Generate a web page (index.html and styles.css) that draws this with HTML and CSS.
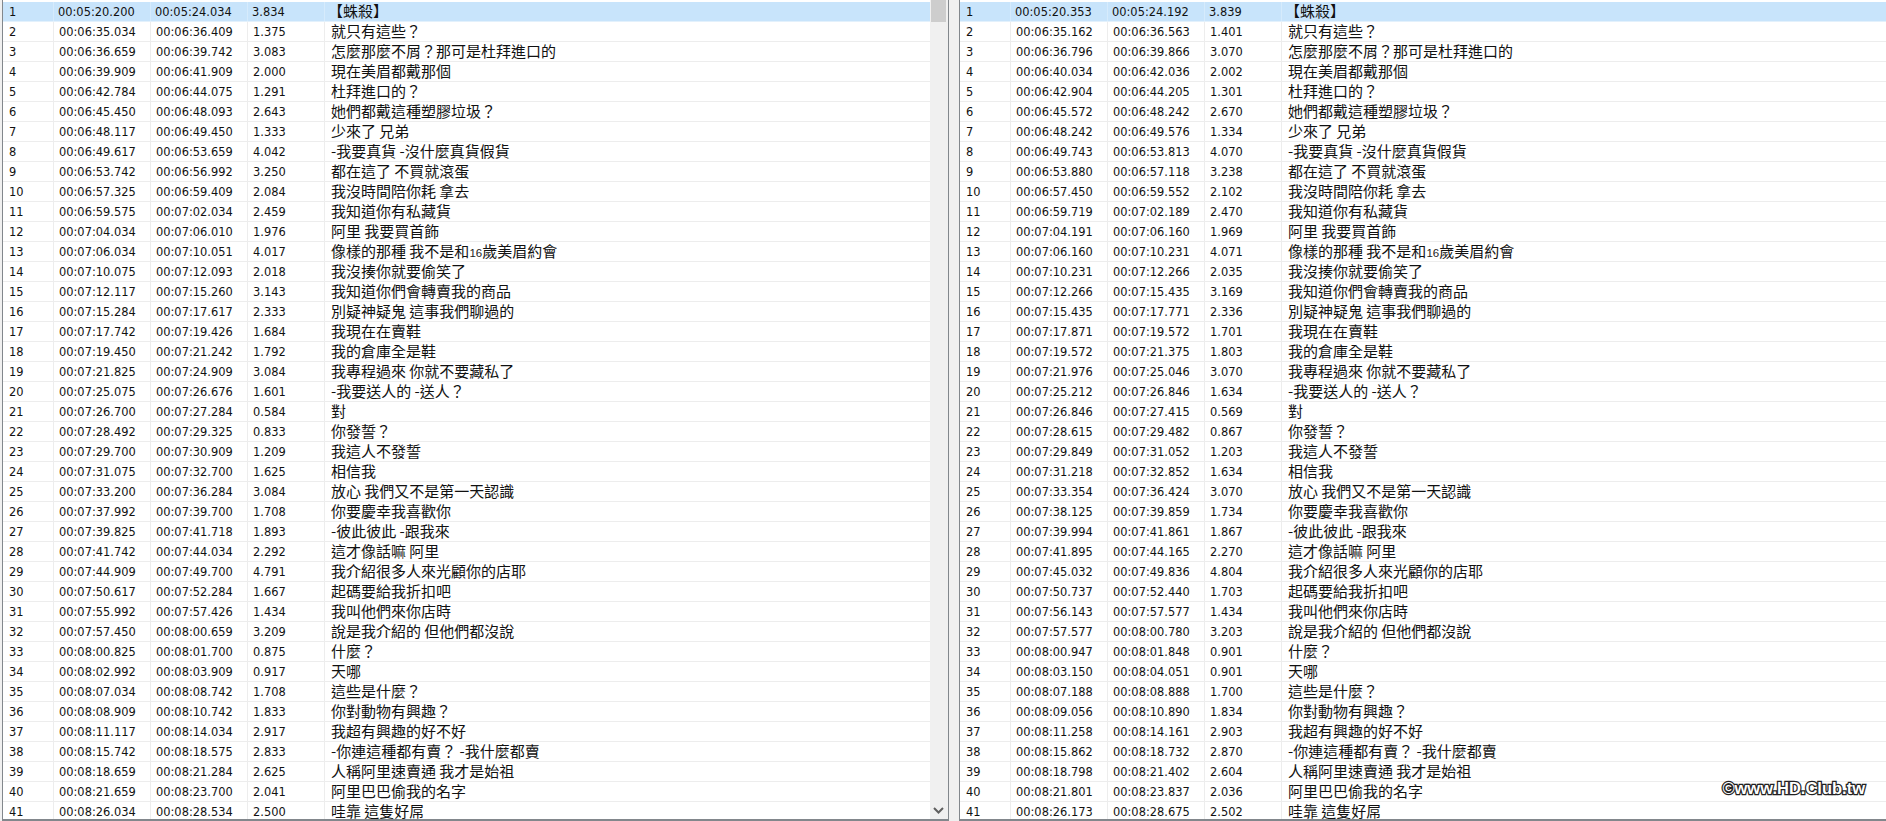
FILE: index.html
```html
<!DOCTYPE html>
<html lang="zh-Hant">
<head>
<meta charset="utf-8">
<title>Subtitle comparison</title>
<link rel="stylesheet" href="styles.css">
</head>
<body>
<main class="screen">
<section class="panel panel-left">
<div class="list">
<div class="row selected"><span>1</span><span>00:05:20.200</span><span>00:05:24.034</span><span>3.834</span><span class="txt">【蛛殺】</span></div>
<div class="row"><span>2</span><span>00:06:35.034</span><span>00:06:36.409</span><span>1.375</span><span class="txt">就只有這些？</span></div>
<div class="row"><span>3</span><span>00:06:36.659</span><span>00:06:39.742</span><span>3.083</span><span class="txt">怎麼那麼不屑？那可是杜拜進口的</span></div>
<div class="row"><span>4</span><span>00:06:39.909</span><span>00:06:41.909</span><span>2.000</span><span class="txt">現在美眉都戴那個</span></div>
<div class="row"><span>5</span><span>00:06:42.784</span><span>00:06:44.075</span><span>1.291</span><span class="txt">杜拜進口的？</span></div>
<div class="row"><span>6</span><span>00:06:45.450</span><span>00:06:48.093</span><span>2.643</span><span class="txt">她們都戴這種塑膠垃圾？</span></div>
<div class="row"><span>7</span><span>00:06:48.117</span><span>00:06:49.450</span><span>1.333</span><span class="txt">少來了 兄弟</span></div>
<div class="row"><span>8</span><span>00:06:49.617</span><span>00:06:53.659</span><span>4.042</span><span class="txt">-我要真貨 -沒什麼真貨假貨</span></div>
<div class="row"><span>9</span><span>00:06:53.742</span><span>00:06:56.992</span><span>3.250</span><span class="txt">都在這了 不買就滾蛋</span></div>
<div class="row"><span>10</span><span>00:06:57.325</span><span>00:06:59.409</span><span>2.084</span><span class="txt">我沒時間陪你耗 拿去</span></div>
<div class="row"><span>11</span><span>00:06:59.575</span><span>00:07:02.034</span><span>2.459</span><span class="txt">我知道你有私藏貨</span></div>
<div class="row"><span>12</span><span>00:07:04.034</span><span>00:07:06.010</span><span>1.976</span><span class="txt">阿里 我要買首飾</span></div>
<div class="row"><span>13</span><span>00:07:06.034</span><span>00:07:10.051</span><span>4.017</span><span class="txt">像樣的那種 我不是和<span class="latin">16</span>歲美眉約會</span></div>
<div class="row"><span>14</span><span>00:07:10.075</span><span>00:07:12.093</span><span>2.018</span><span class="txt">我沒揍你就要偷笑了</span></div>
<div class="row"><span>15</span><span>00:07:12.117</span><span>00:07:15.260</span><span>3.143</span><span class="txt">我知道你們會轉賣我的商品</span></div>
<div class="row"><span>16</span><span>00:07:15.284</span><span>00:07:17.617</span><span>2.333</span><span class="txt">別疑神疑鬼 這事我們聊過的</span></div>
<div class="row"><span>17</span><span>00:07:17.742</span><span>00:07:19.426</span><span>1.684</span><span class="txt">我現在在賣鞋</span></div>
<div class="row"><span>18</span><span>00:07:19.450</span><span>00:07:21.242</span><span>1.792</span><span class="txt">我的倉庫全是鞋</span></div>
<div class="row"><span>19</span><span>00:07:21.825</span><span>00:07:24.909</span><span>3.084</span><span class="txt">我專程過來 你就不要藏私了</span></div>
<div class="row"><span>20</span><span>00:07:25.075</span><span>00:07:26.676</span><span>1.601</span><span class="txt">-我要送人的 -送人？</span></div>
<div class="row"><span>21</span><span>00:07:26.700</span><span>00:07:27.284</span><span>0.584</span><span class="txt">對</span></div>
<div class="row"><span>22</span><span>00:07:28.492</span><span>00:07:29.325</span><span>0.833</span><span class="txt">你發誓？</span></div>
<div class="row"><span>23</span><span>00:07:29.700</span><span>00:07:30.909</span><span>1.209</span><span class="txt">我這人不發誓</span></div>
<div class="row"><span>24</span><span>00:07:31.075</span><span>00:07:32.700</span><span>1.625</span><span class="txt">相信我</span></div>
<div class="row"><span>25</span><span>00:07:33.200</span><span>00:07:36.284</span><span>3.084</span><span class="txt">放心 我們又不是第一天認識</span></div>
<div class="row"><span>26</span><span>00:07:37.992</span><span>00:07:39.700</span><span>1.708</span><span class="txt">你要慶幸我喜歡你</span></div>
<div class="row"><span>27</span><span>00:07:39.825</span><span>00:07:41.718</span><span>1.893</span><span class="txt">-彼此彼此 -跟我來</span></div>
<div class="row"><span>28</span><span>00:07:41.742</span><span>00:07:44.034</span><span>2.292</span><span class="txt">這才像話嘛 阿里</span></div>
<div class="row"><span>29</span><span>00:07:44.909</span><span>00:07:49.700</span><span>4.791</span><span class="txt">我介紹很多人來光顧你的店耶</span></div>
<div class="row"><span>30</span><span>00:07:50.617</span><span>00:07:52.284</span><span>1.667</span><span class="txt">起碼要給我折扣吧</span></div>
<div class="row"><span>31</span><span>00:07:55.992</span><span>00:07:57.426</span><span>1.434</span><span class="txt">我叫他們來你店時</span></div>
<div class="row"><span>32</span><span>00:07:57.450</span><span>00:08:00.659</span><span>3.209</span><span class="txt">說是我介紹的 但他們都沒說</span></div>
<div class="row"><span>33</span><span>00:08:00.825</span><span>00:08:01.700</span><span>0.875</span><span class="txt">什麼？</span></div>
<div class="row"><span>34</span><span>00:08:02.992</span><span>00:08:03.909</span><span>0.917</span><span class="txt">天哪</span></div>
<div class="row"><span>35</span><span>00:08:07.034</span><span>00:08:08.742</span><span>1.708</span><span class="txt">這些是什麼？</span></div>
<div class="row"><span>36</span><span>00:08:08.909</span><span>00:08:10.742</span><span>1.833</span><span class="txt">你對動物有興趣？</span></div>
<div class="row"><span>37</span><span>00:08:11.117</span><span>00:08:14.034</span><span>2.917</span><span class="txt">我超有興趣的好不好</span></div>
<div class="row"><span>38</span><span>00:08:15.742</span><span>00:08:18.575</span><span>2.833</span><span class="txt">-你連這種都有賣？ -我什麼都賣</span></div>
<div class="row"><span>39</span><span>00:08:18.659</span><span>00:08:21.284</span><span>2.625</span><span class="txt">人稱阿里速賣通 我才是始祖</span></div>
<div class="row"><span>40</span><span>00:08:21.659</span><span>00:08:23.700</span><span>2.041</span><span class="txt">阿里巴巴偷我的名字</span></div>
<div class="row"><span>41</span><span>00:08:26.034</span><span>00:08:28.534</span><span>2.500</span><span class="txt">哇靠 這隻好屌</span></div>
</div>
<div class="scrollbar">
<div class="thumb"></div>
<svg class="chevron" width="11" height="7" viewBox="0 0 11 7"><path d="M1 1l4.500 4.500L10 1" fill="none" stroke="#606060" stroke-width="2"/></svg>
</div>
</section>
<section class="panel panel-right">
<div class="list">
<div class="row selected"><span>1</span><span>00:05:20.353</span><span>00:05:24.192</span><span>3.839</span><span class="txt">【蛛殺】</span></div>
<div class="row"><span>2</span><span>00:06:35.162</span><span>00:06:36.563</span><span>1.401</span><span class="txt">就只有這些？</span></div>
<div class="row"><span>3</span><span>00:06:36.796</span><span>00:06:39.866</span><span>3.070</span><span class="txt">怎麼那麼不屑？那可是杜拜進口的</span></div>
<div class="row"><span>4</span><span>00:06:40.034</span><span>00:06:42.036</span><span>2.002</span><span class="txt">現在美眉都戴那個</span></div>
<div class="row"><span>5</span><span>00:06:42.904</span><span>00:06:44.205</span><span>1.301</span><span class="txt">杜拜進口的？</span></div>
<div class="row"><span>6</span><span>00:06:45.572</span><span>00:06:48.242</span><span>2.670</span><span class="txt">她們都戴這種塑膠垃圾？</span></div>
<div class="row"><span>7</span><span>00:06:48.242</span><span>00:06:49.576</span><span>1.334</span><span class="txt">少來了 兄弟</span></div>
<div class="row"><span>8</span><span>00:06:49.743</span><span>00:06:53.813</span><span>4.070</span><span class="txt">-我要真貨 -沒什麼真貨假貨</span></div>
<div class="row"><span>9</span><span>00:06:53.880</span><span>00:06:57.118</span><span>3.238</span><span class="txt">都在這了 不買就滾蛋</span></div>
<div class="row"><span>10</span><span>00:06:57.450</span><span>00:06:59.552</span><span>2.102</span><span class="txt">我沒時間陪你耗 拿去</span></div>
<div class="row"><span>11</span><span>00:06:59.719</span><span>00:07:02.189</span><span>2.470</span><span class="txt">我知道你有私藏貨</span></div>
<div class="row"><span>12</span><span>00:07:04.191</span><span>00:07:06.160</span><span>1.969</span><span class="txt">阿里 我要買首飾</span></div>
<div class="row"><span>13</span><span>00:07:06.160</span><span>00:07:10.231</span><span>4.071</span><span class="txt">像樣的那種 我不是和<span class="latin">16</span>歲美眉約會</span></div>
<div class="row"><span>14</span><span>00:07:10.231</span><span>00:07:12.266</span><span>2.035</span><span class="txt">我沒揍你就要偷笑了</span></div>
<div class="row"><span>15</span><span>00:07:12.266</span><span>00:07:15.435</span><span>3.169</span><span class="txt">我知道你們會轉賣我的商品</span></div>
<div class="row"><span>16</span><span>00:07:15.435</span><span>00:07:17.771</span><span>2.336</span><span class="txt">別疑神疑鬼 這事我們聊過的</span></div>
<div class="row"><span>17</span><span>00:07:17.871</span><span>00:07:19.572</span><span>1.701</span><span class="txt">我現在在賣鞋</span></div>
<div class="row"><span>18</span><span>00:07:19.572</span><span>00:07:21.375</span><span>1.803</span><span class="txt">我的倉庫全是鞋</span></div>
<div class="row"><span>19</span><span>00:07:21.976</span><span>00:07:25.046</span><span>3.070</span><span class="txt">我專程過來 你就不要藏私了</span></div>
<div class="row"><span>20</span><span>00:07:25.212</span><span>00:07:26.846</span><span>1.634</span><span class="txt">-我要送人的 -送人？</span></div>
<div class="row"><span>21</span><span>00:07:26.846</span><span>00:07:27.415</span><span>0.569</span><span class="txt">對</span></div>
<div class="row"><span>22</span><span>00:07:28.615</span><span>00:07:29.482</span><span>0.867</span><span class="txt">你發誓？</span></div>
<div class="row"><span>23</span><span>00:07:29.849</span><span>00:07:31.052</span><span>1.203</span><span class="txt">我這人不發誓</span></div>
<div class="row"><span>24</span><span>00:07:31.218</span><span>00:07:32.852</span><span>1.634</span><span class="txt">相信我</span></div>
<div class="row"><span>25</span><span>00:07:33.354</span><span>00:07:36.424</span><span>3.070</span><span class="txt">放心 我們又不是第一天認識</span></div>
<div class="row"><span>26</span><span>00:07:38.125</span><span>00:07:39.859</span><span>1.734</span><span class="txt">你要慶幸我喜歡你</span></div>
<div class="row"><span>27</span><span>00:07:39.994</span><span>00:07:41.861</span><span>1.867</span><span class="txt">-彼此彼此 -跟我來</span></div>
<div class="row"><span>28</span><span>00:07:41.895</span><span>00:07:44.165</span><span>2.270</span><span class="txt">這才像話嘛 阿里</span></div>
<div class="row"><span>29</span><span>00:07:45.032</span><span>00:07:49.836</span><span>4.804</span><span class="txt">我介紹很多人來光顧你的店耶</span></div>
<div class="row"><span>30</span><span>00:07:50.737</span><span>00:07:52.440</span><span>1.703</span><span class="txt">起碼要給我折扣吧</span></div>
<div class="row"><span>31</span><span>00:07:56.143</span><span>00:07:57.577</span><span>1.434</span><span class="txt">我叫他們來你店時</span></div>
<div class="row"><span>32</span><span>00:07:57.577</span><span>00:08:00.780</span><span>3.203</span><span class="txt">說是我介紹的 但他們都沒說</span></div>
<div class="row"><span>33</span><span>00:08:00.947</span><span>00:08:01.848</span><span>0.901</span><span class="txt">什麼？</span></div>
<div class="row"><span>34</span><span>00:08:03.150</span><span>00:08:04.051</span><span>0.901</span><span class="txt">天哪</span></div>
<div class="row"><span>35</span><span>00:08:07.188</span><span>00:08:08.888</span><span>1.700</span><span class="txt">這些是什麼？</span></div>
<div class="row"><span>36</span><span>00:08:09.056</span><span>00:08:10.890</span><span>1.834</span><span class="txt">你對動物有興趣？</span></div>
<div class="row"><span>37</span><span>00:08:11.258</span><span>00:08:14.161</span><span>2.903</span><span class="txt">我超有興趣的好不好</span></div>
<div class="row"><span>38</span><span>00:08:15.862</span><span>00:08:18.732</span><span>2.870</span><span class="txt">-你連這種都有賣？ -我什麼都賣</span></div>
<div class="row"><span>39</span><span>00:08:18.798</span><span>00:08:21.402</span><span>2.604</span><span class="txt">人稱阿里速賣通 我才是始祖</span></div>
<div class="row"><span>40</span><span>00:08:21.801</span><span>00:08:23.837</span><span>2.036</span><span class="txt">阿里巴巴偷我的名字</span></div>
<div class="row"><span>41</span><span>00:08:26.173</span><span>00:08:28.675</span><span>2.502</span><span class="txt">哇靠 這隻好屌</span></div>
</div>
<div class="watermark">©www.HD.Club.tw</div>
</section>
</main>
</body>
</html>
```

FILE: styles.css
```css
* {
  box-sizing: border-box;
}

html,
body {
  margin: 0;
  height: 821px;
  overflow: hidden;
  background: #f0f0f0;
}

.screen {
  display: flex;
  justify-content: space-between;
  width: 1886px;
  height: 821px;
  font-family: "DejaVu Sans", "Liberation Sans", sans-serif;
  font-stretch: condensed;
  font-size: 12.7px;
  color: #111;
}

.panel {
  position: relative;
  display: flex;
  height: 821px;
  overflow: hidden;
  background: #fff;
  border-left: 1px solid #82878c;
  border-bottom: 2px solid #82878c;
}

.panel-left {
  width: 947px;
  margin-left: 2px;
  border-right: 1px solid #82878c;
}

.panel-right {
  width: 927px;
}

.list {
  flex: 1;
  min-width: 0;
  padding-top: 2px;
}

.row {
  display: grid;
  grid-template-columns: 51px 97px 97px 77px 1fr;
  height: 20px;
  line-height: 19px;
  border-bottom: 1px solid #ededed;
  white-space: nowrap;
}

.row > span {
  height: 19px;
  padding-left: 5px;
  border-right: 1px solid #ededed;
}

.row > span:first-child {
  padding-left: 6px;
}

.row > .txt {
  padding-left: 6px;
  border-right: 0;
  font-family: "Noto Sans CJK TC", sans-serif;
  font-stretch: normal;
  font-size: 15px;
  line-height: 17px;
  color: #111;
}

.row.selected {
  background: #c8e4fb;
  border-bottom-color: #e3f1fc;
}

.row.selected > span {
  padding-left: 4px;
  border-right-color: #d6ebfc;
}

.row.selected > span:first-child {
  padding-left: 6px;
}

.row.selected > .txt {
  padding-left: 3px;
}

.latin {
  font-family: "Liberation Sans", sans-serif;
  font-size: 11.5px;
  color: #222;
}

.scrollbar {
  display: flex;
  flex-direction: column;
  align-items: center;
  justify-content: space-between;
  flex: none;
  width: 18px;
  padding: 0 2px 5px 1px;
  background: #f0f0f0;
}

.thumb {
  width: 15px;
  height: 22px;
  background: #cdcdcd;
}

.watermark {
  position: absolute;
  right: 21px;
  bottom: 22px;
  font-family: "Liberation Sans", sans-serif;
  font-stretch: normal;
  font-size: 16.5px;
  font-weight: 700;
  line-height: 18px;
  color: #fff;
  -webkit-text-stroke: 2.5px #222;
  paint-order: stroke fill;
}
```
